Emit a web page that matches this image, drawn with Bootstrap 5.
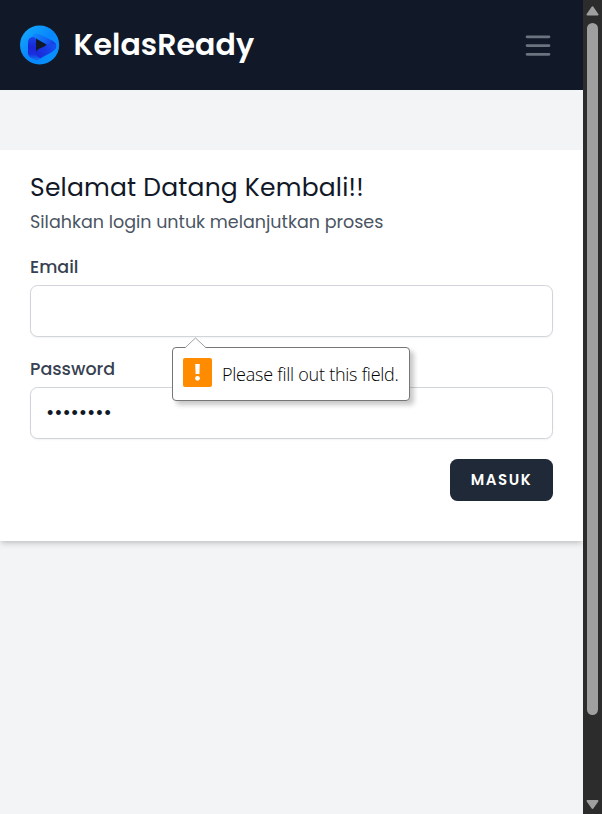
<!DOCTYPE html>
<html lang="id">
<head>
<meta charset="utf-8">
<meta name="viewport" content="width=device-width, initial-scale=1">
<title>KelasReady</title>
<link href="https://cdn.jsdelivr.net/npm/bootstrap@5.3.0/dist/css/bootstrap.min.css" rel="stylesheet">
<style>
body{font-family:Poppins,Inter,sans-serif;background:#f3f4f6;color:#111827}
.page-area{min-width:0}
.top-nav{height:90px;background:#111827;padding:0 27.5px 0 20px}
.brand-name{font-size:30px;font-weight:600;line-height:1;letter-spacing:.06px;color:#fff;margin-left:13.5px}
.menu-btn{width:35px;height:40px}
.login-panel{margin-top:60px;height:391px;padding:20px 30px;box-shadow:0 4px 6px -1px rgba(0,0,0,.14),0 2px 4px -1px rgba(0,0,0,.08)}
.login-title{font-size:25px;line-height:35px;font-weight:400;letter-spacing:.2px;margin:0}
.login-sub{font-size:17.5px;line-height:30px;color:#4b5563;margin:2px 0 18px}
.field-label{font-size:17.5px;line-height:25px;font-weight:500;letter-spacing:0;color:#374151;margin:0;display:block}
.field-input{height:52px;border:1px solid #d1d5db;border-radius:7.5px;margin-top:5px;padding:0 16px;box-shadow:0 1px 2px rgba(0,0,0,.05);color:#111827}
.field-pass{font-size:18px;letter-spacing:1.9px;padding-top:1px;font-family:"Liberation Sans",sans-serif}
.field-group{height:102px}
.submit-btn,.submit-btn:hover{width:103px;height:42px;background:#1f2937;color:#fff;border:0;border-radius:7.5px;font-size:15px;font-weight:600;letter-spacing:1.5px}
.hint{left:142px;top:92px;width:238px;height:54px;border:1px solid #767676;border-radius:4px;padding:0 10px;box-shadow:4px 4px 5px rgba(0,0,0,.22);z-index:3;background:#fff}
.hint-tip{left:12px;top:-11px}
.hint-text{font:300 18px/24px "Segoe UI","Open Sans",sans-serif;letter-spacing:-.25px;color:#000;margin-left:10px}
.scroll-rail{width:19px;background:#2c2c2c;padding:6px 0 4px}
.scroll-thumb{width:11px;height:692px;border-radius:6px;background:#9f9f9f;margin:7px 0 0}
</style>
</head>
<body class="d-flex vh-100 overflow-hidden">
<div class="page-area flex-grow-1">
  <nav class="top-nav d-flex align-items-center justify-content-between">
    <a href="#" class="d-flex align-items-center text-decoration-none">
      <svg width="40" height="40" viewBox="0 0 40 40" aria-hidden="true">
        <defs>
          <linearGradient id="ring" x1="0" y1="0" x2="1" y2="1"><stop offset="0" stop-color="#15aefb"/><stop offset=".5" stop-color="#0887fc"/><stop offset="1" stop-color="#0793fd"/></linearGradient>
          <linearGradient id="foldLeft" x1="0" y1="0" x2="0" y2="1"><stop offset="0" stop-color="#1a45ea"/><stop offset=".45" stop-color="#1726d6"/><stop offset=".75" stop-color="#1a2edd"/><stop offset="1" stop-color="#0f74f8"/></linearGradient>
          <linearGradient id="foldTop" gradientUnits="userSpaceOnUse" x1="12" y1="8" x2="35" y2="22"><stop offset="0" stop-color="#0c8cfc"/><stop offset=".5" stop-color="#116cf6"/><stop offset="1" stop-color="#1a2fdc"/></linearGradient>
          <linearGradient id="foldBottom" gradientUnits="userSpaceOnUse" x1="15" y1="30" x2="34" y2="20"><stop offset="0" stop-color="#1a26d6"/><stop offset=".55" stop-color="#1739e4"/><stop offset="1" stop-color="#1550ee"/></linearGradient>
        </defs>
        <circle cx="19.600" cy="20" r="19.600" fill="url(#ring)"/>
        <path d="M12 11q3-4 9-1l12 6q4 3 3 7-3 4-8 2L15 16z" fill="url(#foldTop)"/>
        <path d="M14 24q4-1 8-2 3-1 4-3 6 2 10-1 1 6-4 9l-11 6q-4 3-7 1z" fill="url(#foldBottom)"/>
        <path d="M8 18q0-6 5-6 3 0 3 4v11q0 6 6 6-5 3-9 1-5-2-5-6z" fill="url(#foldLeft)"/>
        <path d="M16 13.500L26.500 19.500q-1 2-4.500 3-4 1-6 4z" fill="#111827"/>
      </svg>
      <span class="brand-name">KelasReady</span>
    </a>
    <button class="menu-btn btn border-0 p-0 d-flex align-items-center justify-content-center" aria-label="Menu">
      <svg width="30" height="30" viewBox="0 0 24 24" fill="none" stroke="#6b7280" stroke-width="2.200" stroke-linecap="round"><path d="M3.200 5.400h17.600M3.200 12.400h17.600M3.200 19.400h17.600"/></svg>
    </button>
  </nav>
  <main class="login-panel bg-white">
    <h1 class="login-title">Selamat Datang Kembali!!</h1>
    <p class="login-sub">Silahkan login untuk melanjutkan proses</p>
    <form novalidate>
      <div class="field-group position-relative">
        <label class="field-label" for="email">Email</label>
        <input id="email" type="email" class="field-input form-control">
        <div class="hint position-absolute d-flex align-items-center" role="alert">
          <svg class="hint-tip position-absolute" width="21" height="12" viewBox="0 0 21 12"><path d="M0 12V11L10.500 1 21 11v1z" fill="#fff"/><path d="M0 10.800L10.500 1 21 10.800" fill="none" stroke="#a0a0a0"/></svg>
          <svg class="flex-shrink-0 mb-1" width="29" height="29" viewBox="0 0 29 29"><rect width="29" height="29" rx="2" fill="#ff8c00"/><path d="M12.200 6h4.600l-.4 10h-3.800z" fill="#fff"/><circle cx="14.500" cy="20.300" r="2.400" fill="#fff"/></svg>
          <span class="hint-text text-nowrap">Please fill out this field.</span>
        </div>
      </div>
      <div class="field-group">
        <label class="field-label" for="password">Password</label>
        <input id="password" type="password" value="password" class="field-input field-pass form-control">
      </div>
      <div class="d-flex justify-content-end">
        <button type="submit" class="submit-btn btn p-0">MASUK</button>
      </div>
    </form>
  </main>
</div>
<aside class="scroll-rail flex-shrink-0 d-flex flex-column align-items-center" aria-hidden="true">
  <svg class="flex-shrink-0" width="13" height="10" viewBox="0 0 13 10"><path d="M6.500 1.300L11.500 8.500H1.500z" fill="#9f9f9f" stroke="#9f9f9f" stroke-width="2" stroke-linejoin="round"/></svg>
  <div class="scroll-thumb flex-shrink-0"></div>
  <svg class="mt-auto flex-shrink-0" width="13" height="11" viewBox="0 0 13 11"><path d="M6.500 9L11.500 2H1.500z" fill="#9f9f9f" stroke="#9f9f9f" stroke-width="2" stroke-linejoin="round"/></svg>
</aside>
<script src="https://cdn.jsdelivr.net/npm/bootstrap@5.3.0/dist/js/bootstrap.bundle.min.js"></script>
</body>
</html>
